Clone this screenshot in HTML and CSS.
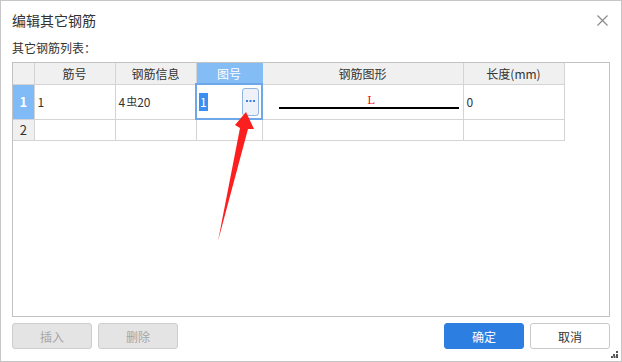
FILE: index.html
```html
<!DOCTYPE html>
<html lang="zh-CN">
<head>
    <meta charset="UTF-8">
    <title>编辑其它钢筋</title>
    <link rel="stylesheet" href="styles.css">
</head>
<body>
    <div class="dialog">
        <div class="title-bar">
            <span class="title">编辑其它钢筋</span>
            <span class="close">
                <svg width="11" height="11" viewBox="0 0 11 11"><path d="M0.5 0.5 L10.5 10.5 M10.5 0.5 L0.5 10.5" stroke="#8a8a8a" stroke-width="1.2" fill="none"/></svg>
            </span>
        </div>
        <div class="list-label">其它钢筋列表：</div>

        <div class="grid-box">
            <table class="grid">
                <colgroup>
                    <col style="width: 21px">
                    <col style="width: 81px">
                    <col style="width: 81px">
                    <col style="width: 66px">
                    <col style="width: 201px">
                    <col style="width: 101px">
                </colgroup>
                <thead>
                    <tr>
                        <th class="corner"></th>
                        <th>筋号</th>
                        <th>钢筋信息</th>
                        <th class="active-col">图号</th>
                        <th>钢筋图形</th>
                        <th>长度(mm)</th>
                    </tr>
                </thead>
                <tbody>
                    <tr class="row-tall">
                        <td class="row-no selected">1</td>
                        <td>1</td>
                        <td>4<span class="grade">虫</span>20</td>
                        <td class="editing">
                            <div class="edit-wrap">
                                <span class="sel-text">1</span>
                                <span class="more-btn">
                                    <svg width="9" height="3" viewBox="0 0 9 3" fill="#3b82e0"><rect x="0" y="0" width="2" height="2"/><rect x="3.5" y="0" width="2" height="2"/><rect x="7" y="0" width="2" height="2"/></svg>
                                </span>
                            </div>
                        </td>
                        <td class="shape-cell">
                            <div class="shape">
                                <span class="shape-label">L</span>
                                <div class="shape-line"></div>
                            </div>
                        </td>
                        <td>0</td>
                    </tr>
                    <tr>
                        <td class="row-no">2</td>
                        <td></td>
                        <td></td>
                        <td></td>
                        <td></td>
                        <td></td>
                    </tr>
                </tbody>
            </table>
        </div>

        <div class="footer">
            <div class="btn-group">
                <button class="btn disabled">插入</button>
                <button class="btn disabled">删除</button>
            </div>
            <div class="btn-group">
                <button class="btn primary">确定</button>
                <button class="btn">取消</button>
            </div>
        </div>

        <span class="grip">
            <svg width="7" height="7" viewBox="0 0 7 7" fill="#555"><rect x="5" y="0" width="2" height="2"/><rect x="2" y="3" width="2" height="2"/><rect x="5" y="3" width="2" height="2"/><rect x="0" y="5" width="2" height="2"/><rect x="2.5" y="5" width="2" height="2"/><rect x="5" y="5" width="2" height="2"/></svg>
        </span>

        <!-- red pointer drawn over the dialog -->
        <svg class="pointer" width="622" height="362" viewBox="0 0 622 362">
            <polygon points="246,112 254,129 248,129 218,241 240,128 235,125" fill="#fb1f1f"/>
        </svg>
    </div>
</body>
</html>
```

FILE: styles.css
```css
body {
    margin: 0;
    font-family: "Noto Sans CJK SC", "Noto Sans", sans-serif;
    font-size: 12px;
    color: #333;
    background: #fff;
}

.dialog {
    position: relative;
    width: 622px;
    height: 362px;
    box-sizing: border-box;
    border: 1px solid #c6c6c6;
    background: #fff;
    display: flex;
    flex-direction: column;
}

.title-bar {
    height: 38px;
    display: flex;
    align-items: center;
    justify-content: space-between;
    padding: 0 13px 0 11px;
}

.title {
    font-size: 14px;
    color: #333;
}

.close {
    display: flex;
    align-items: center;
}

.list-label {
    height: 18px;
    line-height: 18px;
    padding-left: 11px;
    margin-bottom: 5px;
    font-size: 12px;
    color: #333;
}

.grid-box {
    margin: 0 11px;
    height: 255px;
    box-sizing: border-box;
    border: 1px solid #c2c2c2;
    overflow: hidden;
}

.grid {
    border-collapse: collapse;
    table-layout: fixed;
    width: 551px;
}

.grid th {
    height: 20px;
    padding: 0;
    font-weight: normal;
    background: #f0f0f0;
    color: #333;
    border-right: 1px solid #d4d4d4;
    border-bottom: 1px solid #d4d4d4;
    text-align: center;
}

.grid th.active-col {
    background: #84bcf6;
    color: #fff;
    border-right-color: #84bcf6;
}

.grid td {
    height: 20px;
    padding: 0 3px;
    border-right: 1px solid #d4d4d4;
    border-bottom: 1px solid #d4d4d4;
    white-space: nowrap;
}

.grid tr.row-tall td {
    height: 33px;
}

.grid td.row-no {
    background: #f0f0f0;
    text-align: center;
    padding: 0;
    font-size: 13px;
}

.grid td.row-no.selected {
    background: #80bbf7;
    color: #fff;
    font-weight: bold;
}

.grade {
    font-size: 11px;
    margin-left: 1px;
    position: relative;
    top: -1px;
}

.grid td.editing {
    padding: 0;
    border: 2px solid #6ea8ea;
}

.edit-wrap {
    display: flex;
    align-items: center;
    justify-content: space-between;
    padding: 0 2px;
    height: 32px;
}

.sel-text {
    background: #3a8ff0;
    color: #fff;
    padding: 0 1px;
    line-height: 18px;
}

.more-btn {
    width: 17px;
    height: 28px;
    box-sizing: border-box;
    border: 1px solid #8fb5e0;
    border-radius: 3px;
    background: #eef1f8;
    display: flex;
    align-items: center;
    justify-content: center;
}

.more-btn svg {
    display: block;
}

.grid td.shape-cell {
    padding: 0 3px 0 16px;
}

.shape {
    display: flex;
    flex-direction: column;
    align-items: center;
    width: 180px;
}

.shape-label {
    font-family: "DejaVu Serif", serif;
    color: #f00;
    font-size: 11px;
    line-height: 11px;
    margin-left: 4px;
}

.shape-line {
    width: 180px;
    height: 2px;
    background: #000;
    margin-top: 1px;
}

.footer {
    display: flex;
    justify-content: space-between;
    padding: 6px 11px 0 11px;
}

.btn-group {
    display: flex;
    gap: 6px;
}

.btn {
    width: 80px;
    height: 26px;
    box-sizing: border-box;
    border: 1px solid #c8c8c8;
    border-radius: 3px;
    background: #fff;
    color: #333;
    font-family: "Noto Sans CJK SC", sans-serif;
    font-size: 12px;
    padding: 0;
}

.btn.disabled {
    background: #e4e4e4;
    color: #a6a6a6;
    border-color: #cdcdcd;
}

.btn.primary {
    background: #2c7fe0;
    border-color: #2c7fe0;
    color: #fff;
}

.grip {
    position: absolute;
    right: 3px;
    bottom: 3px;
    line-height: 0;
}

.pointer {
    position: absolute;
    left: -1px;
    top: -1px;
    pointer-events: none;
}
```
